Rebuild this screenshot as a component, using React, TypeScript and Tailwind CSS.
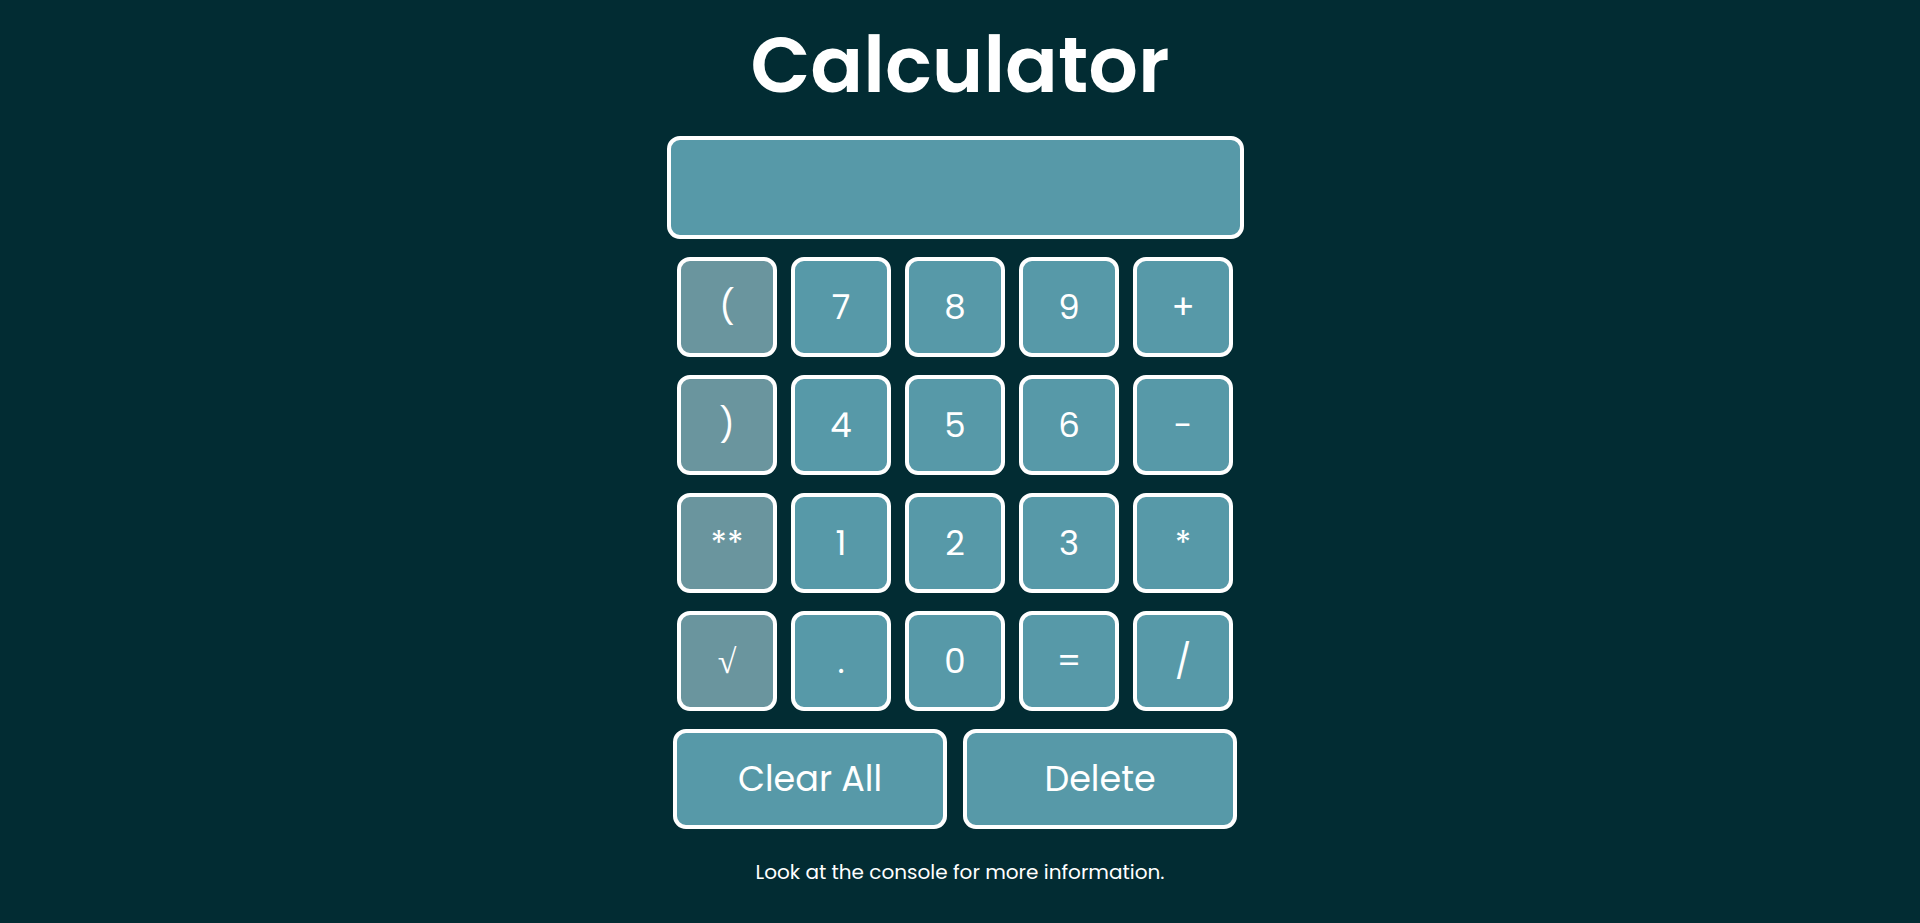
import React from 'react';

const keys: { label: string; side?: boolean }[] = [
  { label: '(', side: true }, { label: '7' }, { label: '8' }, { label: '9' }, { label: '+' },
  { label: ')', side: true }, { label: '4' }, { label: '5' }, { label: '6' }, { label: '-' },
  { label: '**', side: true }, { label: '1' }, { label: '2' }, { label: '3' }, { label: '*' },
  { label: '√', side: true }, { label: '.' }, { label: '0' }, { label: '=' }, { label: '/' },
];

const App: React.FC = () => {
  return (
    <div className="min-h-screen bg-[#022c33] flex flex-col items-center text-white font-[Poppins,Inter,sans-serif]">
      <h1 className="mt-[26px] text-[78px] font-semibold leading-none">Calculator</h1>

      <div className="mr-[10px] flex flex-col items-center">
        {/* Display */}
        <div className="mt-[32px] w-[577px] h-[103px] bg-[#5799a8] border-4 border-white rounded-[13px]" />

        {/* Keypad */}
        <div className="mt-[18px] grid grid-cols-5 gap-x-[14px] gap-y-[18px]">
          {keys.map((k) => (
            <button
              key={k.label}
              className={`w-[100px] h-[100px] border-4 border-white rounded-[13px] flex items-center justify-center text-[34px] text-white ${
                k.side ? 'bg-[#6a959e]' : 'bg-[#5799a8]'
              }`}
            >
              {k.label === '√' ? (
                <span className="font-[Liberation_Serif,serif] text-[34px]">√</span>
              ) : (
                k.label
              )}
            </button>
          ))}
        </div>

        <div className="mt-[18px] flex gap-[16px]">
          <button className="w-[274px] h-[100px] bg-[#5799a8] border-4 border-white rounded-[13px] text-[35px] text-white">
            Clear All
          </button>
          <button className="w-[274px] h-[100px] bg-[#5799a8] border-4 border-white rounded-[13px] text-[35px] text-white">
            Delete
          </button>
        </div>
      </div>

      <p className="mt-[28px] text-[20px] leading-[30px]">Look at the console for more information.</p>
    </div>
  );
};

export default App;
